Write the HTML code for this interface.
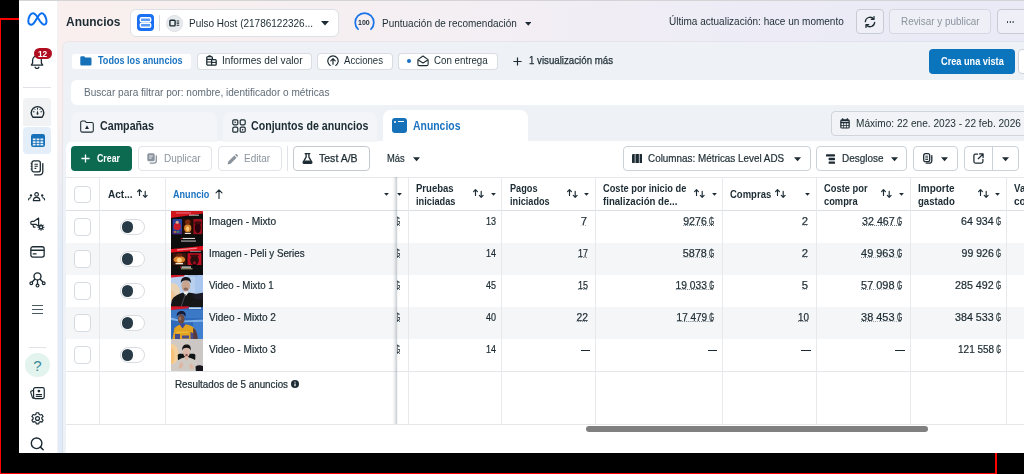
<!DOCTYPE html>
<html lang="es"><head>
<meta charset="utf-8">
<title>Anuncios</title>
<style>
*{box-sizing:border-box;margin:0;padding:0}
html,body{width:1024px;height:474px;overflow:hidden;background:#000}
body{position:relative;font-family:"Liberation Sans",sans-serif;font-size:12px;color:#1c2b33}
.a{position:absolute}
.t{position:absolute;white-space:nowrap;line-height:1;transform-origin:0 50%}
.r{position:absolute;white-space:nowrap;line-height:1;transform-origin:100% 50%}
.b{font-weight:bold}
#app{position:absolute;left:0;top:0;width:1024px;height:453px;overflow:hidden;background:#fff}
#blk{position:absolute;left:0;top:0;width:19px;height:453px;background:#000}
#main{position:absolute;left:58px;top:0;width:966px;height:453px;
 background:linear-gradient(180deg,rgba(225,235,247,0) 0%,rgba(225,235,247,0) 25%,#e1ebf7 55%,#e1ebf7 100%),linear-gradient(90deg,#f9efee 0%,#f4eff3 40%,#ecebf6 75%,#e9eaf6 100%)}
#sideb{position:absolute;left:57px;top:0;width:1px;height:453px;background:rgba(40,20,40,0.050)}
#topline{position:absolute;left:19px;top:0;width:1005px;height:1px;background:#d4d4d6}
#panel{position:absolute;left:62.500px;top:42.300px;width:970px;height:420px;border-radius:5.500px 0 0 0;background:#eef2f6;box-shadow:0 0 0 0.800px rgba(60,60,80,0.070)}
#card{position:absolute;left:66px;top:141px;width:970px;height:320px;border-radius:7px 0 0 0;background:#fff}
.chip{position:absolute;top:54px;height:15px;background:#fff;border-radius:3px}
.chip.o{box-shadow:0 0 0 1px #d9dde2}
.hb{position:absolute;top:9px;height:25px;background:#efeff7;border:1px solid #c6cbd4;border-radius:4px}
.tab{position:absolute;top:112px;height:30px;border-radius:8px 8px 0 0;background:#f3f5f8}
.tb{position:absolute;top:146px;height:25px;background:#fff;border:1px solid #cbd2d9;border-radius:4px}
.tb.d{border-color:#e1e4e8}
.red{background:#ff0000;position:absolute}
.vl{position:absolute;width:1px;background:#e7e9ec;top:177px;height:247px}
.hl{position:absolute;height:1px;background:#e4e6e9;left:66px;width:958px}
.cb{position:absolute;left:74px;width:16.800px;height:17.300px;border:1px solid #d6dbe1;border-radius:4px;background:#fff}
.tg{position:absolute;left:120.200px;width:24.800px;height:15.400px;border:1px solid #d8dce1;border-radius:8px;background:#fff}
.tg i{position:absolute;left:0.700px;top:1px;width:11.400px;height:11.400px;border-radius:50%;background:#283a45}
.row{position:absolute;left:66px;width:958px;height:32px}
.row.g{background:#f5f6f7}
.u{background:linear-gradient(90deg,#6d7880 50%,rgba(0,0,0,0) 50%) 0 9.900px/2px 1px repeat-x}
.gs{display:inline-block;width:5.100px;margin-left:2.300px;font-style:normal;transform:scaleX(.62);transform-origin:0 50%}
.ht{font-weight:bold;font-size:11px;color:#1c2b33}
.num{font-size:10.7px;color:#1c2b33;-webkit-text-stroke:0.220px #1c2b33}
</style>
</head>
<body>
<div id="app">
 <div id="main"></div>
 <div id="sideb"></div>
 <div id="panel"></div>
 <div id="card"></div>
 <!-- ===== header ===== -->
 <div class="t b" style="left: 66px; font-size: 13.5px; top: 15px; transform: scaleX(0.8853);">Anuncios</div>
 <div class="a" style="left:130px;top:9px;width:209px;height:28px;background:#fff;border:1px solid #dde1e6;border-radius:6px"></div>
 <div class="a" style="left:137px;top:14px;width:17px;height:17px;border-radius:4px;background:#1b6ff2"></div>
 <svg class="a" style="left:137px;top:14px" width="17" height="17" viewBox="0 0 17 17"><rect x="3.3" y="3.7" width="10.4" height="4" rx="1.2" fill="#5b9bf8" stroke="#fff" stroke-width="1.4"></rect><rect x="3.3" y="9.3" width="10.4" height="4" rx="1.2" fill="#5b9bf8" stroke="#fff" stroke-width="1.4"></rect></svg>
 <div class="a" style="left:159px;top:15px;width:1px;height:16px;background:#d8dce1"></div>
 <div class="a" style="left:166px;top:15px;width:17px;height:17px;border-radius:50%;background:#e9ecef;border:1px solid #dcdfe4"></div>
 <svg class="a" style="left:169px;top:19px" width="11" height="9" viewBox="0 0 11 9"><rect x="0.9" y="1.3" width="5.2" height="5.6" rx="0.8" fill="none" stroke="#1c2b33" stroke-width="1.4"></rect><path d="M7.6 2h2.6M7.6 4.1h2.6M7.6 6.2h2.6" stroke="#1c2b33" stroke-width="1.1"></path></svg>
 <div class="t" style="left: 189px; font-size: 10.8px; top: 18px; transform: scaleX(0.9264);">Pulso Host (21786122326...</div>
 <svg class="a" style="left:321px;top:21px" width="8" height="5" viewBox="0 0 8 5"><path d="M0 0h8L4 4.6z" fill="#1c2b33"></path></svg>
 <svg class="a" style="left:352.600px;top:11.300px" width="23" height="23" viewBox="0 0 23 23"><path d="M5.040 18.200A9.300 9.300 0 1 1 17.960 18.200" fill="none" stroke="#1a73e8" stroke-width="1.700" stroke-linecap="round"></path></svg>
 <div class="t b" style="left: 358.1px; font-size: 7.9px; top: 19px; transform: scaleX(0.8855);">100</div>
 <div class="t" style="left: 381.6px; font-size: 10.8px; top: 18px; transform: scaleX(0.9242);">Puntuación de recomendación</div>
 <svg class="a" style="left:524.500px;top:21.500px" width="6.500" height="4" viewBox="0 0 8 5"><path d="M0 0h8L4 4.6z" fill="#1c2b33"></path></svg>
 <div class="t" style="left: 669.2px; font-size: 10.8px; top: 16px; transform: scaleX(0.9276);">Última actualización: hace un momento</div>
 <div class="hb" style="left:856px;width:28px"></div>
 <svg class="a" style="left:863.500px;top:15.800px" width="12" height="12" viewBox="0 0 12 12"><path d="M1.300 5.600A4.700 4.700 0 0 1 9.600 3M10.700 6.400A4.700 4.700 0 0 1 2.400 9" fill="none" stroke="#1c2b33" stroke-width="1.250" stroke-linecap="round"></path><path d="M10 0.600v2.700H7.300M2 11.400V8.700h2.700" fill="none" stroke="#1c2b33" stroke-width="1.250" stroke-linecap="round" stroke-linejoin="round"></path></svg>
 <div class="hb" style="left:889px;width:102px;border-color:#d4d8e0"></div>
 <div class="t" style="left: 900.5px; font-size: 10.8px; color: rgb(138, 148, 158); top: 16px; transform: scaleX(0.9164);">Revisar y publicar</div>
 <div class="hb" style="left:997px;width:40px"></div>
 <div class="a" style="left:1006.700px;top:21px;width:1.800px;height:1.800px;background:#1c2b33;border-radius:1px;box-shadow:2.800px 0 0 #1c2b33,5.600px 0 0 #1c2b33"></div>

 <!-- ===== chips row ===== -->
 <div class="chip" style="left:72px;width:119px"></div>
 <svg class="a" style="left:80px;top:56px" width="12" height="10" viewBox="0 0 12 10"><path d="M0.3 1.5a1.2 1.2 0 0 1 1.2-1.2h2.6l1.3 1.3h4.9a1.2 1.2 0 0 1 1.2 1.2v5.4a1.2 1.2 0 0 1-1.2 1.2H1.5a1.2 1.2 0 0 1-1.2-1.2z" fill="#1771b8"></path></svg>
 <div class="t b" style="left: 98px; font-size: 10.9px; color: rgb(26, 115, 192); top: 55px; transform: scaleX(0.8334);">Todos los anuncios</div>
 <div class="chip o" style="left:198px;width:113px"></div>
 <svg class="a" style="left:206px;top:55px" width="11" height="11" viewBox="0 0 11 11"><rect x="0.8" y="1.6" width="5.6" height="8.6" rx="1.2" fill="none" stroke="#1c2b33" stroke-width="1.3"></rect><path d="M2.5 0.8h2.2M1 4.4h5M1 7h5" stroke="#1c2b33" stroke-width="1.2"></path><rect x="5.6" y="4.6" width="4.6" height="5.6" rx="1" fill="#fff" stroke="#1c2b33" stroke-width="1.3"></rect><path d="M5.8 7.4h4.2" stroke="#1c2b33" stroke-width="1.1"></path></svg>
 <div class="t" style="left: 222.07px; font-size: 10.9px; top: 55px; transform: scaleX(0.931);">Informes del valor</div>
 <div class="chip o" style="left:318px;width:74px"></div>
 <svg class="a" style="left:326.5px;top:54.5px" width="12" height="12" viewBox="0 0 12 12"><path d="M3.2 10.4A5.2 5.2 0 1 1 8.8 10.4" fill="none" stroke="#1c2b33" stroke-width="1.2" stroke-linecap="round"></path><path d="M6 9.2V4M3.8 5.9L6 3.7l2.2 2.2" fill="none" stroke="#1c2b33" stroke-width="1.2" stroke-linecap="round" stroke-linejoin="round"></path></svg>
 <div class="t" style="left: 343.7px; font-size: 10.9px; top: 55px; transform: scaleX(0.8828);">Acciones</div>
 <div class="chip o" style="left:399px;width:98px"></div>
 <div class="a" style="left:407px;top:59px;width:4px;height:4px;border-radius:50%;background:#1771c6"></div>
 <svg class="a" style="left:416.5px;top:54.5px" width="12" height="12" viewBox="0 0 12 12"><path d="M0.9 4.6L6 1l5.1 3.6v4.6a1.4 1.4 0 0 1-1.4 1.4H2.3A1.4 1.4 0 0 1 .9 9.200z" fill="none" stroke="#1c2b33" stroke-width="1.100" stroke-linejoin="round"></path><path d="M1.2 5l4.8 3 4.8-3" fill="none" stroke="#1c2b33" stroke-width="1.100" stroke-linejoin="round"></path></svg>
 <div class="t" style="left: 433.8px; font-size: 10.9px; top: 55px; transform: scaleX(0.8951);">Con entrega</div>
 <svg class="a" style="left:513px;top:57px" width="9" height="9" viewBox="0 0 9 9"><path d="M4.5 0.4v8.2M0.4 4.5h8.2" stroke="#1c2b33" stroke-width="1.2"></path></svg>
 <div class="t" style="left: 528.6px; font-size: 10.9px; -webkit-text-stroke: 0.25px rgb(28, 43, 51); top: 55px; transform: scaleX(0.8897);">1 visualización más</div>
 <div class="a" style="left:929px;top:49px;width:86px;height:25px;border-radius:4px;background:#0a75bd"></div>
 <div class="t b" style="left: 941px; font-size: 11px; color: rgb(255, 255, 255); top: 56px; transform: scaleX(0.8346);">Crea una vista</div>
 <div class="a" style="left:1018px;top:49px;width:30px;height:25px;border-radius:4px;background:#fff;border:1px solid #cfd4da"></div>

 <!-- ===== search ===== -->
 <div class="a" style="left:71px;top:80px;width:960px;height:25px;border-radius:6px;background:#fff"></div>
 <div class="t" style="left: 83.8px; font-size: 10.8px; color: rgb(95, 107, 118); top: 87px; transform: scaleX(0.9317);">Buscar para filtrar por: nombre, identificador o métricas</div>

 <!-- ===== tabs ===== -->
 <div class="tab" style="left:71px;width:146px"></div>
 <svg class="a" style="left:80px;top:119.5px" width="14" height="13" viewBox="0 0 14 13"><path d="M0.7 2.4A1.5 1.5 0 0 1 2.200.9h2.700l1.400 1.500h5.500a1.500 1.500 0 0 1 1.500 1.500v6.700a1.500 1.500 0 0 1-1.500 1.500H2.200a1.500 1.500 0 0 1-1.500-1.500z" fill="none" stroke="#1c2b33" stroke-width="1.050"></path><path d="M7 5.200L9 9H5z" fill="#1c2b33"></path></svg>
 <div class="t b" style="left: 99.6px; font-size: 12.5px; top: 120px; transform: scaleX(0.8535);">Campañas</div>
 <div class="tab" style="left:223px;width:154px"></div>
 <svg class="a" style="left:232px;top:119px" width="14" height="14" viewBox="0 0 14 14"><g fill="none" stroke="#1c2b33" stroke-width="1.2"><rect x="0.8" y="0.8" width="5" height="5" rx="1.2"></rect><rect x="8.2" y="0.8" width="5" height="5" rx="1.2"></rect><rect x="0.8" y="8.200" width="5" height="5" rx="1.2"></rect><rect x="8.2" y="8.200" width="5" height="5" rx="1.2"></rect></g><path d="M2.600 2.300l1.800 1-1.800 1zM10 9.700l1.800 1-1.800 1z" fill="#1c2b33"></path></svg>
 <div class="t b" style="left: 250.7px; font-size: 12.5px; top: 120px; transform: scaleX(0.8499);">Conjuntos de anuncios</div>
 <div class="a" style="left:383px;top:110px;width:145px;height:32px;border-radius:8px 8px 0 0;background:#fff"></div>
 <div class="a" style="left:391.5px;top:117.5px;width:15px;height:15px;border-radius:3px;background:#1771b8"></div>
 <div class="a" style="left:394px;top:120.500px;width:2px;height:2px;border-radius:50%;background:#fff"></div>
 <div class="a" style="left:397.5px;top:121px;width:6px;height:1px;background:#fff"></div>
 <div class="t b" style="left: 413.4px; font-size: 12.5px; color: rgb(26, 115, 192); top: 120px; transform: scaleX(0.8334);">Anuncios</div>
 <div class="a" style="left:831px;top:111px;width:210px;height:25px;border-radius:4px;background:#f1f3f6;border:1px solid #cfd4da"></div>
 <svg class="a" style="left:840px;top:117.500px" width="10" height="11" viewBox="0 0 10 11"><rect x="1.900" y="0.200" width="1.500" height="2.400" rx="0.600" fill="#1c2b33"></rect><rect x="6.600" y="0.200" width="1.500" height="2.400" rx="0.600" fill="#1c2b33"></rect><rect x="0.200" y="1.300" width="9.600" height="9.300" rx="1.700" fill="#1c2b33"></rect><path d="M1.500 3.200h7v0.800h-7zM1.500 5.200h1.800v1.700H1.500zM4.100 5.200h1.800v1.700H4.100zM6.700 5.200h1.800v1.700H6.700zM1.500 7.800h1.800v1.600H1.500zM4.100 7.800h1.800v1.600H4.100zM6.700 7.800h1.800v1.600H6.700z" fill="#f1f3f6"></path></svg>
 <div class="t" style="left: 856px; font-size: 10.7px; top: 118px; transform: scaleX(0.9443);">Máximo: 22 ene. 2023 - 22 feb. 2026</div>
 <!-- ===== toolbar ===== -->
 <div class="a" style="left:71px;top:146px;width:61px;height:25px;border-radius:4px;background:#0b6a50"></div>
 <svg class="a" style="left:81px;top:154px" width="9" height="9" viewBox="0 0 9 9"><path d="M4.500 0.400v8.200M0.400 4.500h8.200" stroke="#fff" stroke-width="1.300"></path></svg>
 <div class="t b" style="left: 97px; font-size: 10.8px; color: rgb(255, 255, 255); top: 153px; transform: scaleX(0.817);">Crear</div>
 <div class="tb d" style="left:138px;width:74px"></div>
 <svg class="a" style="left:147px;top:153px" width="11" height="11" viewBox="0 0 11 11"><rect x="0.300" y="0.300" width="7.400" height="8" rx="1.600" fill="#8a949e"></rect><path d="M9.300 2.800v5a2.300 2.300 0 0 1-2.300 2.300H3.200" fill="none" stroke="#8a949e" stroke-width="1.300" stroke-linecap="round"></path><path d="M2.200 3h3.600M2.200 5h2.400" stroke="#fff" stroke-width="0.900"></path></svg>
 <div class="t" style="left: 163.7px; font-size: 10.8px; color: rgb(138, 148, 158); top: 153px; transform: scaleX(0.9248);">Duplicar</div>
 <div class="tb d" style="left:218px;width:64px"></div>
 <svg class="a" style="left:226.500px;top:153.500px" width="11" height="11" viewBox="0 0 11 11"><path d="M0.600 10.400l0.700-3L7.300 1.400l2.300 2.300-6 6zM8 0.800l0.600-0.500a0.900 0.900 0 0 1 1.200 0l0.900 0.900a0.900 0.900 0 0 1 0 1.200l-0.500 0.600z" fill="#8a949e"></path></svg>
 <div class="t" style="left: 243.8px; font-size: 10.8px; color: rgb(138, 148, 158); top: 153px; transform: scaleX(0.9263);">Editar</div>
 <div class="a" style="left:287px;top:146px;width:1px;height:25px;background:#dfe2e6"></div>
 <div class="tb" style="left:293px;width:77px;border-color:#c4c9cf"></div>
 <svg class="a" style="left:302px;top:153px" width="11" height="11" viewBox="0 0 11 11"><path d="M3.200 0.700h4.600M4.100 0.700v3.400L1.200 9.100a0.800 0.800 0 0 0 0.700 1.200h7.200a0.800 0.800 0 0 0 0.700-1.200L6.900 4.100V0.700" fill="none" stroke="#1c2b33" stroke-width="1.300" stroke-linejoin="round" stroke-linecap="round"></path><path d="M2.600 7.400h5.800l1.300 2.600H1.300z" fill="#1c2b33"></path></svg>
 <div class="t" style="left: 319px; font-size: 10.8px; -webkit-text-stroke: 0.25px rgb(28, 43, 51); top: 153px; transform: scaleX(0.975);">Test A/B</div>
 <div class="t" style="left: 386.5px; font-size: 10.8px; -webkit-text-stroke: 0.2px rgb(28, 43, 51); top: 153px; transform: scaleX(0.8667);">Más</div>
 <svg class="a" style="left:413px;top:156.500px" width="7" height="5" viewBox="0 0 8 5"><path d="M0 0h8L4 4.600z" fill="#1c2b33"></path></svg>

 <div class="tb" style="left:623px;width:188px"></div>
 <svg class="a" style="left:631.500px;top:153.700px" width="10.500" height="9.200" viewBox="0 0 10.500 9.200"><rect x="0" y="0" width="10.500" height="9.200" rx="1.300" fill="#1c2b33"></rect><path d="M3.150 0v9.200M7.350 0v9.200" stroke="#fff" stroke-width="0.700"></path></svg>
 <div class="t" style="left: 648.2px; font-size: 10.8px; -webkit-text-stroke: 0.2px rgb(28, 43, 51); top: 153px; transform: scaleX(0.9148);">Columnas: Métricas Level ADS</div>
 <svg class="a" style="left:793.500px;top:156.500px" width="7" height="5" viewBox="0 0 8 5"><path d="M0 0h8L4 4.600z" fill="#1c2b33"></path></svg>
 <div class="tb" style="left:816px;width:91px"></div>
 <svg class="a" style="left:826px;top:153.500px" width="9" height="10" viewBox="0 0 9 10"><rect x="0" y="0.200" width="9" height="2.400" rx="0.600" fill="#1c2b33"></rect><rect x="2.600" y="3.800" width="6.400" height="2.400" rx="0.600" fill="#1c2b33"></rect><rect x="2.600" y="7.400" width="6.400" height="2.400" rx="0.600" fill="#1c2b33"></rect></svg>
 <div class="t" style="left: 841.7px; font-size: 10.8px; -webkit-text-stroke: 0.2px rgb(28, 43, 51); top: 153px; transform: scaleX(0.9221);">Desglose</div>
 <svg class="a" style="left:890.500px;top:156.500px" width="7" height="5" viewBox="0 0 8 5"><path d="M0 0h8L4 4.600z" fill="#1c2b33"></path></svg>
 <div class="tb" style="left:913px;width:45px"></div>
 <svg class="a" style="left:922.500px;top:153px" width="10" height="11" viewBox="0 0 10 11"><rect x="0.700" y="0.700" width="6" height="8" rx="1.600" fill="none" stroke="#1c2b33" stroke-width="1.300"></rect><path d="M8.800 2.600v5.200a2.400 2.400 0 0 1-2.400 2.400H3.200" fill="none" stroke="#1c2b33" stroke-width="1.300" stroke-linecap="round"></path><path d="M2.300 3.200h2.800M2.300 4.900h2.800M2.300 6.500h2.800" stroke="#1c2b33" stroke-width="0.900"></path></svg>
 <svg class="a" style="left:940.500px;top:156.500px" width="7" height="5" viewBox="0 0 8 5"><path d="M0 0h8L4 4.600z" fill="#1c2b33"></path></svg>
 <div class="tb" style="left:964px;width:55px"></div>
 <div class="a" style="left:991.500px;top:146px;width:1px;height:25px;background:#cbd2d9"></div>
 <svg class="a" style="left:972.500px;top:153px" width="11" height="11" viewBox="0 0 11 11"><path d="M4.600 1H2.400A1.500 1.500 0 0 0 0.900 2.500v6A1.500 1.500 0 0 0 2.400 10h6a1.500 1.500 0 0 0 1.500-1.500V6.300" fill="none" stroke="#1c2b33" stroke-width="1.250" stroke-linecap="round"></path><path d="M6.600 0.900h3.500v3.500M9.900 1.100L5.300 5.700" fill="none" stroke="#1c2b33" stroke-width="1.250" stroke-linecap="round" stroke-linejoin="round"></path></svg>
 <svg class="a" style="left:1001.500px;top:156.500px" width="7" height="5" viewBox="0 0 8 5"><path d="M0 0h8L4 4.600z" fill="#1c2b33"></path></svg>

 <!-- ===== table ===== -->
 <div class="row g" style="top:243px"></div>
 <div class="row g" style="top:307px"></div>
 <div class="hl" style="top:177px"></div>
 <div class="hl" style="top:210px;background:#dcdfe3"></div>
 <div class="hl" style="top:371px"></div>
 <div class="hl" style="top:424px"></div>
 <div class="vl" style="left:99px"></div>
 <div class="vl" style="left:165px"></div>
 <div class="vl" style="left:408px"></div>
 <div class="vl" style="left:501px"></div>
 <div class="vl" style="left:595px"></div>
 <div class="vl" style="left:722px"></div>
 <div class="vl" style="left:816px"></div>
 <div class="vl" style="left:910px"></div>
 <div class="vl" style="left:1006px"></div>
 <!-- sticky col shadow -->
 <div class="a" style="left:392px;top:177px;width:5px;height:247px;background:linear-gradient(90deg,rgba(120,130,140,0) 0%,rgba(120,130,140,0.08) 40%,rgba(120,130,140,0.30) 80%,rgba(120,130,140,0.38) 100%)"></div>
 <div class="a" style="left:397px;top:177px;width:1px;height:247px;background:rgba(120,130,140,0.08)"></div>

 <!-- header cells -->
 <div class="cb" style="top:186px"></div>
 <div class="t ht" style="left: 107.5px; top: 188.5px; transform: scaleX(0.9129);">Act...</div>
 <svg class="a" style="left:136.500px;top:189px" width="11" height="9" viewBox="0 0 11 9"><path d="M2.500 6.400V0.700M0.600 2.600L2.500 0.700 4.400 2.600M8.200 2.200V8.300M6.300 6.400l1.900 1.900 1.900-1.900" fill="none" stroke="#1c2b33" stroke-width="1.150" stroke-linecap="round" stroke-linejoin="round"></path></svg>
 <div class="t ht" style="font-size: 11px; left: 173.4px; color: rgb(26, 115, 192); top: 189px; transform: scaleX(0.8244);">Anuncio</div>
 <svg class="a" style="left:214.500px;top:189px" width="8" height="10" viewBox="0 0 8 10"><path d="M4 9.400V1M1 3.900L4 0.900l3 3" fill="none" stroke="#1c2b33" stroke-width="1.100" stroke-linecap="round" stroke-linejoin="round"></path></svg>
 <svg class="a" style="left:383.500px;top:193px" width="5" height="3" viewBox="0 0 8 5"><path d="M0 0h8L4 4.600z" fill="#1c2b33"></path></svg>
 <svg class="a" style="left:397px;top:193px" width="5" height="3" viewBox="0 0 8 5"><path d="M0 0h8L4 4.600z" fill="#1c2b33"></path></svg>
 <!-- metric header cells -->
 <div class="t ht" style="left: 415.6px; top: 183px; transform: scaleX(0.8662);">Pruebas</div>
 <div class="t ht" style="left: 415.6px; top: 196px; transform: scaleX(0.839);">iniciadas</div>
 <svg class="a" style="left:473px;top:189px" width="11" height="9" viewBox="0 0 11 9"><path d="M2.500 6.400V0.700M0.600 2.600L2.500 0.700 4.400 2.600M8.200 2.200V8.300M6.300 6.400l1.900 1.900 1.900-1.900" fill="none" stroke="#1c2b33" stroke-width="1.150" stroke-linecap="round" stroke-linejoin="round"></path></svg>
 <svg class="a" style="left:490.5px;top:193px" width="5" height="3" viewBox="0 0 8 5"><path d="M0 0h8L4 4.600z" fill="#1c2b33"></path></svg>
 <div class="t ht" style="left: 509.6px; top: 183px; transform: scaleX(0.833);">Pagos</div>
 <div class="t ht" style="left: 509.6px; top: 196px; transform: scaleX(0.8326);">iniciados</div>
 <svg class="a" style="left:566.5px;top:189px" width="11" height="9" viewBox="0 0 11 9"><path d="M2.500 6.400V0.700M0.600 2.600L2.500 0.700 4.400 2.600M8.200 2.200V8.300M6.300 6.400l1.900 1.900 1.900-1.900" fill="none" stroke="#1c2b33" stroke-width="1.150" stroke-linecap="round" stroke-linejoin="round"></path></svg>
 <svg class="a" style="left:584px;top:193px" width="5" height="3" viewBox="0 0 8 5"><path d="M0 0h8L4 4.600z" fill="#1c2b33"></path></svg>
 <div class="t ht" style="left: 602.9px; top: 183px; transform: scaleX(0.8413);">Coste por inicio de</div>
 <div class="t ht" style="left: 602.9px; top: 196px; transform: scaleX(0.8751);">finalización de...</div>
 <svg class="a" style="left:693.5px;top:189px" width="11" height="9" viewBox="0 0 11 9"><path d="M2.500 6.400V0.700M0.600 2.600L2.500 0.700 4.400 2.600M8.200 2.200V8.300M6.300 6.400l1.900 1.900 1.900-1.900" fill="none" stroke="#1c2b33" stroke-width="1.150" stroke-linecap="round" stroke-linejoin="round"></path></svg>
 <svg class="a" style="left:711.5px;top:193px" width="5" height="3" viewBox="0 0 8 5"><path d="M0 0h8L4 4.600z" fill="#1c2b33"></path></svg>
 <div class="t ht" style="left: 730.1px; top: 189px; transform: scaleX(0.8641);">Compras</div>
 <svg class="a" style="left:774.5px;top:189px" width="11" height="9" viewBox="0 0 11 9"><path d="M2.500 6.400V0.700M0.600 2.600L2.500 0.700 4.400 2.600M8.200 2.200V8.300M6.300 6.400l1.900 1.900 1.900-1.900" fill="none" stroke="#1c2b33" stroke-width="1.150" stroke-linecap="round" stroke-linejoin="round"></path></svg>
 <svg class="a" style="left:805px;top:193px" width="5" height="3" viewBox="0 0 8 5"><path d="M0 0h8L4 4.600z" fill="#1c2b33"></path></svg>
 <div class="t ht" style="left: 823.6px; top: 183px; transform: scaleX(0.8491);">Coste por</div>
 <div class="t ht" style="left: 823.6px; top: 196px; transform: scaleX(0.8469);">compra</div>
 <svg class="a" style="left:881px;top:189px" width="11" height="9" viewBox="0 0 11 9"><path d="M2.500 6.400V0.700M0.600 2.600L2.500 0.700 4.400 2.600M8.200 2.200V8.300M6.300 6.400l1.900 1.900 1.900-1.900" fill="none" stroke="#1c2b33" stroke-width="1.150" stroke-linecap="round" stroke-linejoin="round"></path></svg>
 <svg class="a" style="left:898.5px;top:193px" width="5" height="3" viewBox="0 0 8 5"><path d="M0 0h8L4 4.600z" fill="#1c2b33"></path></svg>
 <div class="t ht" style="left: 917.7px; top: 183px; transform: scaleX(0.9075);">Importe</div>
 <div class="t ht" style="left: 917.7px; top: 196px; transform: scaleX(0.8715);">gastado</div>
 <svg class="a" style="left:978px;top:189px" width="11" height="9" viewBox="0 0 11 9"><path d="M2.500 6.400V0.700M0.600 2.600L2.500 0.700 4.400 2.600M8.200 2.200V8.300M6.300 6.400l1.900 1.900 1.900-1.900" fill="none" stroke="#1c2b33" stroke-width="1.150" stroke-linecap="round" stroke-linejoin="round"></path></svg>
 <svg class="a" style="left:995px;top:193px" width="5" height="3" viewBox="0 0 8 5"><path d="M0 0h8L4 4.600z" fill="#1c2b33"></path></svg>
 <div class="t ht" style="left: 1014px; top: 183px; transform: scaleX(0.874);">Va</div>
 <div class="t ht" style="left: 1014px; top: 196px; transform: scaleX(0.9148);">co</div>
 <!-- rows -->
 <div class="cb" style="top:218.4px"></div>
 <div class="tg" style="top:219.2px"><i></i></div>
 <div class="a th1" style="left:171px;top:211px;width:32px;height:32px;overflow:hidden"><svg width="32" height="32" viewBox="0 0 32 32"><defs><filter id="bl1" x="-10%" y="-10%" width="120%" height="120%"><feGaussianBlur stdDeviation="0.7"></feGaussianBlur></filter></defs><g filter="url(#bl1)"><rect x="-2" y="-2" width="36" height="36" fill="#0b0708"></rect><path d="M-2 -2h36v4.200L-2 7.200z" fill="#d0121f"></path><rect x="5" y="1.200" width="15" height="1.400" fill="#f08a8f" opacity="0.600"></rect><rect x="18" y="3.600" width="10" height="1.200" fill="#e8e8e8" opacity="0.700"></rect><rect x="1.500" y="8" width="9.500" height="15.200" fill="#253f9a"></rect><ellipse cx="6.200" cy="15.500" rx="3.600" ry="3.800" fill="#c81c2b"></ellipse><circle cx="6.200" cy="11.300" r="1.600" fill="#d9a58c"></circle><rect x="1.500" y="19.800" width="9.500" height="3.400" fill="#4a2a7a"></rect><rect x="3" y="20.300" width="2.300" height="1.300" fill="#c8a030"></rect><rect x="6" y="20.300" width="2.300" height="1.300" fill="#30a070"></rect><rect x="11.800" y="8" width="9.800" height="15.200" fill="#2c0d06"></rect><ellipse cx="16.700" cy="17.200" rx="3.600" ry="4" fill="#d8842e"></ellipse><ellipse cx="16.700" cy="17.800" rx="1.600" ry="2.400" fill="#f6c878"></ellipse><ellipse cx="16.700" cy="11" rx="2.600" ry="2.600" fill="#7a2a10"></ellipse><rect x="13.800" y="21.800" width="6" height="1.200" fill="#e8e0d8"></rect><rect x="22.400" y="8" width="8.800" height="15.200" fill="#980e1e"></rect><ellipse cx="26.800" cy="16.500" rx="3" ry="5.500" fill="#2a060a"></ellipse><ellipse cx="26.800" cy="11.800" rx="3.600" ry="1.500" fill="#3a080c"></ellipse><circle cx="10.300" cy="27.400" r="0.700" fill="#e01020"></circle><rect x="11.500" y="26.900" width="12.500" height="1.100" fill="#dadada"></rect><rect x="10" y="29.500" width="15" height="1.100" fill="#bcbcbc"></rect></g></svg></div>
 <div class="t num" style="left: 209.4px; top: 216px; transform: scaleX(0.9486);">Imagen - Mixto</div>
 <div class="a" style="left:396.500px;top:215.0px;width:4px;height:13px;overflow:hidden"><div class="t num" style="left: -1.6px; top: 1px;"><i class="gs" style="margin-left:0">₲</i></div><div class="a u" style="left:0;top:0;width:4px;height:13px;background-position:0 10px"></div></div>
 <div class="r num" style="right: 527.7px; top: 216px; transform: scaleX(0.841);">13</div>
 <div class="r num" style="right: 436.6px; top: 216px; transform: scaleX(1.0583);"><span class="u">7</span></div>
 <div class="r num" style="right: 309.6px; top: 216px; transform: scaleX(0.9945);"><span class="u">9276<i class="gs">₲</i></span></div>
 <div class="r num" style="right: 215.6px; top: 216px; transform: scaleX(1.0583);"><span class="u">2</span></div>
 <div class="r num" style="right: 121.8px; top: 216px; transform: scaleX(0.9977);"><span class="u">32 467<i class="gs">₲</i></span></div>
 <div class="r num" style="right: 23px; top: 216px; transform: scaleX(0.9977);">64 934<i class="gs">₲</i></div>
 <div class="cb" style="top:250.4px"></div>
 <div class="tg" style="top:251.2px"><i></i></div>
 <div class="a th2" style="left:171px;top:243px;width:32px;height:32px;overflow:hidden"><svg width="32" height="32" viewBox="0 0 32 32"><defs><filter id="bl2" x="-10%" y="-10%" width="120%" height="120%"><feGaussianBlur stdDeviation="0.7"></feGaussianBlur></filter></defs><g filter="url(#bl2)"><rect x="-2" y="-2" width="36" height="36" fill="#0a0707"></rect><path d="M-2 6.200L34 2.700V7.300L-2 9.800z" fill="#e0101f"></path><path d="M6 6.300L26 4.400V5.800L6 7.800z" fill="#f59aa0" opacity="0.850"></path><rect x="19" y="7.800" width="11" height="1" fill="#d8d8d8" opacity="0.700"></rect><rect x="1.500" y="10.200" width="13.700" height="11.800" fill="#3a1308"></rect><ellipse cx="8.300" cy="16.500" rx="5.800" ry="3.600" fill="#d8842e"></ellipse><ellipse cx="8.300" cy="17" rx="2.600" ry="2.200" fill="#ffd080"></ellipse><ellipse cx="8.300" cy="12" rx="3" ry="1.800" fill="#6a2410"></ellipse><rect x="4.500" y="20" width="7.500" height="1.300" fill="#efe6dc"></rect><rect x="16.500" y="10.200" width="13.900" height="11.800" fill="#c01024"></rect><ellipse cx="23.500" cy="17.500" rx="4.300" ry="4.800" fill="#2c070b"></ellipse><ellipse cx="23.500" cy="12.800" rx="4.600" ry="1.400" fill="#3a090d"></ellipse><circle cx="23.500" cy="19.800" r="1.500" fill="#a01020"></circle><circle cx="9.600" cy="24.200" r="0.600" fill="#e01020"></circle><rect x="10.500" y="23.500" width="9.500" height="1.200" fill="#ededed"></rect><rect x="10" y="25.300" width="11.500" height="1" fill="#bdb98a"></rect></g></svg></div>
 <div class="t num" style="left: 209.4px; top: 248px; transform: scaleX(0.9146);">Imagen - Peli y Series</div>
 <div class="a" style="left:396.500px;top:247.0px;width:4px;height:13px;overflow:hidden"><div class="t num" style="left: -1.6px; top: 1px;"><i class="gs" style="margin-left:0">₲</i></div><div class="a u" style="left:0;top:0;width:4px;height:13px;background-position:0 10px"></div></div>
 <div class="r num" style="right: 527.7px; top: 248px; transform: scaleX(0.841);">14</div>
 <div class="r num" style="right: 436.6px; top: 248px; transform: scaleX(0.841);"><span class="u">17</span></div>
 <div class="r num" style="right: 309.6px; top: 248px; transform: scaleX(1.0105);"><span class="u">5878<i class="gs">₲</i></span></div>
 <div class="r num" style="right: 215.6px; top: 248px; transform: scaleX(1.0583);"><span class="u">2</span></div>
 <div class="r num" style="right: 121.8px; top: 248px; transform: scaleX(1.0226);"><span class="u">49 963<i class="gs">₲</i></span></div>
 <div class="r num" style="right: 23px; top: 248px; transform: scaleX(0.9852);">99 926<i class="gs">₲</i></div>
 <div class="cb" style="top:282.4px"></div>
 <div class="tg" style="top:283.2px"><i></i></div>
 <div class="a th3" style="left:171px;top:275px;width:32px;height:32px;overflow:hidden"><svg width="32" height="32" viewBox="0 0 32 32"><defs><filter id="bl3" x="-10%" y="-10%" width="120%" height="120%"><feGaussianBlur stdDeviation="0.7"></feGaussianBlur></filter></defs><g filter="url(#bl3)"><rect x="-2" y="-2" width="36" height="36" fill="#b9d0ef"></rect><ellipse cx="2" cy="17" rx="7" ry="9" fill="#ead2b4"></ellipse><ellipse cx="0.500" cy="21" rx="3.500" ry="5.500" fill="#f0c494"></ellipse><rect x="24" y="-2" width="10" height="20" fill="#a9c6ef"></rect><path d="M-1 34L1 25C3 21 8 18.800 11.500 17.800L19 17.800C23 18.500 28 19.500 32 21.500L34 34z" fill="#121318"></path><path d="M21 19.500L33 17.500V25L24 24z" fill="#1b1d26"></path><ellipse cx="14.800" cy="10.800" rx="4.300" ry="5.900" fill="#c9a48e"></ellipse><ellipse cx="14.800" cy="14" rx="2.300" ry="1.600" fill="#8a6a5c"></ellipse><path d="M9.900 8.300C9.500 3.500 12.300 2 15 2 18.200 2 20.300 4 19.700 8.300 18.800 5.900 17.200 5.300 14.800 5.300 12.400 5.300 10.700 6.100 9.900 8.300z" fill="#14141a"></path><path d="M12.300 17.500L14.800 21 17.500 17.500 16 16.500H13.500z" fill="#f1efec"></path><path d="M14.500 19L10 32" stroke="#5a5a66" stroke-width="0.800"></path><path d="M-2 -2H15L13 1.200-2 2.800z" fill="#d41826"></path><rect x="17" y="0.300" width="10" height="1" fill="#8a9cc0" opacity="0.600"></rect><rect x="-2" y="31.300" width="20" height="3" fill="#c01424"></rect></g></svg></div>
 <div class="t num" style="left: 209.4px; top: 280px; transform: scaleX(0.9094);">Video - Mixto 1</div>
 <div class="a" style="left:396.500px;top:279.0px;width:4px;height:13px;overflow:hidden"><div class="t num" style="left: -1.6px; top: 1px;"><i class="gs" style="margin-left:0">₲</i></div><div class="a u" style="left:0;top:0;width:4px;height:13px;background-position:0 10px"></div></div>
 <div class="r num" style="right: 527.7px; top: 280px; transform: scaleX(0.841);">45</div>
 <div class="r num" style="right: 436.6px; top: 280px; transform: scaleX(0.841);"><span class="u">15</span></div>
 <div class="r num" style="right: 309.6px; top: 280px; transform: scaleX(0.9602);"><span class="u">19 033<i class="gs">₲</i></span></div>
 <div class="r num" style="right: 215.6px; top: 280px; transform: scaleX(1.0583);"><span class="u">5</span></div>
 <div class="r num" style="right: 121.8px; top: 280px; transform: scaleX(1.0226);"><span class="u">57 098<i class="gs">₲</i></span></div>
 <div class="r num" style="right: 23px; top: 280px; transform: scaleX(0.9993);">285 492<i class="gs">₲</i></div>
 <div class="cb" style="top:314.4px"></div>
 <div class="tg" style="top:315.2px"><i></i></div>
 <div class="a th4" style="left:171px;top:307px;width:32px;height:32px;overflow:hidden"><svg width="32" height="32" viewBox="0 0 32 32"><defs><filter id="bl4" x="-10%" y="-10%" width="120%" height="120%"><feGaussianBlur stdDeviation="0.7"></feGaussianBlur></filter></defs><g filter="url(#bl4)"><rect x="-2" y="-2" width="36" height="36" fill="#2f6ab9"></rect><rect x="-2" y="3" width="36" height="8" fill="#3a78c6"></rect><path d="M-2 10L12 13.500 34 12.500V14.800L12 15.300-2 12.500z" fill="#7fb0e8"></path><rect x="22" y="15" width="12" height="19" fill="#3f7fd0"></rect><path d="M1 34L3.500 21C6 18.500 9 17.500 11 17L15 17.500C19 18 22.500 19.500 24 22.500L27 34z" fill="#e2a320"></path><path d="M8.500 17.200L11.500 21.500 14.500 17.600 13 16.500H9.500z" fill="#3a4a9a"></path><path d="M4 27h5v5H4zM11 28.500h7v3h-7zM19.500 25l3.500 1.500V34h-3.500z" fill="#2a3fa0" opacity="0.850"></path><path d="M5.500 24.500h12v1.600h-12z" fill="#f0c040" opacity="0.700"></path><path d="M22 21C25 22 26.500 26 27 34H22.500z" fill="#5a3a3a"></path><ellipse cx="10.200" cy="12" rx="3.300" ry="4.800" fill="#6e4c42"></ellipse><ellipse cx="9" cy="11.500" rx="1.400" ry="2" fill="#9a7060"></ellipse><path d="M5.800 9.500C5.300 5.300 8 4 10.500 4 13.500 4 15.300 6 14.500 9.800 13.500 7.500 12 7 10.300 7 8.300 7 6.800 7.800 5.800 9.500z" fill="#151a38"></path><path d="M-2 -2H19L17 1.200-2 3.300z" fill="#d41826"></path><rect x="18" y="0.400" width="12" height="1.600" fill="#e6ecf6" opacity="0.850"></rect></g></svg></div>
 <div class="t num" style="left: 209.4px; top: 312px; transform: scaleX(0.9418);">Video - Mixto 2</div>
 <div class="a" style="left:396.500px;top:311.0px;width:4px;height:13px;overflow:hidden"><div class="t num" style="left: -1.6px; top: 1px;"><i class="gs" style="margin-left:0">₲</i></div><div class="a u" style="left:0;top:0;width:4px;height:13px;background-position:0 10px"></div></div>
 <div class="r num" style="right: 527.7px; top: 312px; transform: scaleX(0.841);">40</div>
 <div class="r num" style="right: 436.6px; top: 312px; transform: scaleX(0.9671);"><span class="u">22</span></div>
 <div class="r num" style="right: 309.6px; top: 312px; transform: scaleX(0.9353);"><span class="u">17 479<i class="gs">₲</i></span></div>
 <div class="r num" style="right: 215.6px; top: 312px; transform: scaleX(0.9251);"><span class="u">10</span></div>
 <div class="r num" style="right: 121.8px; top: 312px; transform: scaleX(1.0226);"><span class="u">38 453<i class="gs">₲</i></span></div>
 <div class="r num" style="right: 23px; top: 312px; transform: scaleX(0.9993);">384 533<i class="gs">₲</i></div>
 <div class="cb" style="top:346.4px"></div>
 <div class="tg" style="top:347.2px"><i></i></div>
 <div class="a th5" style="left:171px;top:339px;width:32px;height:32px;overflow:hidden"><svg width="32" height="32" viewBox="0 0 32 32"><defs><filter id="bl5" x="-10%" y="-10%" width="120%" height="120%"><feGaussianBlur stdDeviation="0.7"></feGaussianBlur></filter></defs><g filter="url(#bl5)"><rect x="-2" y="-2" width="36" height="36" fill="#d2cbc4"></rect><rect x="18" y="-2" width="16" height="30" fill="#cbc7c4"></rect><ellipse cx="1.500" cy="15" rx="6" ry="10" fill="#f3cf9c"></ellipse><ellipse cx="0" cy="17" rx="3.500" ry="8" fill="#f7c27a"></ellipse><rect x="6.800" y="14.800" width="17.500" height="6.500" rx="1.500" fill="#111214"></rect><path d="M3 34L4.500 24C6.500 21 10 19.300 12.500 18.800L18.500 18.800C21.500 19.500 25 21 26.500 24L28 34z" fill="#cfcbc4"></path><path d="M12.800 18.600L15.500 22 18.200 18.600 17 17.800H14z" fill="#d9b8a6"></path><ellipse cx="15.500" cy="13.300" rx="3.400" ry="4.900" fill="#dbb9a8"></ellipse><ellipse cx="15.500" cy="16" rx="1.300" ry="0.900" fill="#8a4a48"></ellipse><path d="M11.300 11.500C10.800 7.300 13 5.600 15.700 5.600 18.500 5.600 20.300 7.500 19.700 11.500 19 9.300 17.500 8.700 15.500 8.700 13.500 8.700 12 9.400 11.300 11.500z" fill="#121214"></path><ellipse cx="10" cy="26.500" rx="2" ry="3.200" fill="#dcb8a4" transform="rotate(20 10 26.500)"></ellipse><ellipse cx="20.500" cy="27.500" rx="2" ry="3" fill="#dcb8a4" transform="rotate(-20 20.500 27.500)"></ellipse><path d="M24.500 27.500C27 25.500 30 26 34 28V34H25z" fill="#15161a"></path></g></svg></div>
 <div class="t num" style="left: 209.4px; top: 344px; transform: scaleX(0.9418);">Video - Mixto 3</div>
 <div class="a" style="left:396.500px;top:343.0px;width:4px;height:13px;overflow:hidden"><div class="t num" style="left: -1.6px; top: 1px;"><i class="gs" style="margin-left:0">₲</i></div><div class="a u" style="left:0;top:0;width:4px;height:13px;background-position:0 10px"></div></div>
 <div class="r num" style="right: 527.7px; top: 344px; transform: scaleX(0.841);">14</div>
 <div class="a" style="left:580.5px;top:350px;width:9.500px;height:1.200px;background:#1c2b33"></div>
 <div class="a" style="left:707.5px;top:350px;width:9.500px;height:1.200px;background:#1c2b33"></div>
 <div class="a" style="left:801.0px;top:350px;width:9.500px;height:1.200px;background:#1c2b33"></div>
 <div class="a" style="left:895.0px;top:350px;width:9.500px;height:1.200px;background:#1c2b33"></div>
 <div class="r num" style="right: 23px; top: 344px; transform: scaleX(0.9341);">121 558<i class="gs">₲</i></div>
 <!-- footer -->
 <div class="t num" style="left: 174.8px; top: 379px; transform: scaleX(0.9189);">Resultados de 5 anuncios</div>
 <svg class="a" style="left:291px;top:380px" width="8" height="8" viewBox="0 0 8 8"><circle cx="4" cy="4" r="4" fill="#1c2b33"></circle><path d="M4 3.500v2.800" stroke="#fff" stroke-width="1.200"></path><circle cx="4" cy="2.100" r="0.700" fill="#fff"></circle></svg>
 <!-- scrollbar -->
 <div class="a" style="left:586px;top:426px;width:342px;height:6px;border-radius:3px;background:#808080"></div>
 <!-- ===== sidebar ===== -->
 <div id="blk"></div>
 <svg class="a" style="left:27px;top:12px" width="21" height="14" viewBox="0 0 21 14"><path d="M1.300 9.600C1.300 5.200 3.400 1.300 6 1.300c1.800 0 3.100 1.700 4.600 4.200 1.600 2.700 3 4.700 4.700 6.300 1.500 1.400 3.200 0.900 3.800-0.500 0.900-2.100 0-6.200-1.700-8.300-1-1.300-2.300-1.900-3.500-1.500-1.300 0.400-2.300 1.900-3.600 4.200C8.700 8.400 7.400 10.800 6 12c-1.500 1.300-4.700 0.900-4.700-2.400z" fill="none" stroke="#0a6ff0" stroke-width="2" stroke-linejoin="round"></path></svg>
 <!-- bell -->
 <svg class="a" style="left:30px;top:54px" width="14" height="15" viewBox="0 0 14 15"><path d="M2.600 9.200V6.200a4.400 4.400 0 0 1 8.800 0v3l1.300 1.900H1.300z" fill="none" stroke="#1c2b33" stroke-width="1.300" stroke-linejoin="round"></path><path d="M5.200 13.200a1.900 1.900 0 0 0 3.600 0" fill="none" stroke="#1c2b33" stroke-width="1.300" stroke-linecap="round"></path></svg>
 <div class="a" style="left:33.500px;top:48px;width:18px;height:10.500px;border-radius:5.500px;background:#b00d20"></div>
 <div class="t b" style="left: 37.8px; top: 49.5px; font-size: 8.5px; color: rgb(255, 255, 255); transform: scaleX(0.9766);">12</div>
 <div class="a" style="left:23px;top:87px;width:28px;height:1px;background:#dfe3e8"></div>
 <!-- gauge -->
 <div class="a" style="left:23px;top:98px;width:28px;height:28px;border-radius:4px 4px 0 0;background:#f1f2f4"></div>
 <svg class="a" style="left:30px;top:105px" width="15" height="14" viewBox="0 0 15 14"><path d="M3 12.300A6.300 6.300 0 1 1 12 12.300z" fill="none" stroke="#1c2b33" stroke-width="1.400" stroke-linejoin="round"></path><path d="M7.500 3.200v1M3.300 6.800h0.800M10.900 6.800h0.800M4.500 4l0.500 0.500M10.500 4l-0.500 0.500" stroke="#1c2b33" stroke-width="1" stroke-linecap="round"></path><path d="M7.500 5.200l1 3.600a1 1 0 0 1-2 0z" fill="#1c2b33"></path></svg>
 <!-- grid selected -->
 <div class="a" style="left:23px;top:126.500px;width:28px;height:27.500px;border-radius:4px;background:#e3eef8"></div>
 <svg class="a" style="left:30.500px;top:134px" width="14" height="13" viewBox="0 0 14 13"><rect x="0" y="0" width="14" height="13" rx="2.200" fill="#1771b8"></rect><path d="M1.800 4.400h2.800v1.900H1.800zM5.600 4.400h2.800v1.900H5.600zM9.400 4.400h2.800v1.900H9.400zM1.800 7.300h2.800v1.900H1.800zM5.600 7.300h2.800v1.900H5.600zM9.400 7.300h2.800v1.900H9.400zM1.800 10.100h2.800v1.300H1.800zM5.600 10.100h2.800v1.300H5.600zM9.400 10.100h2.800v1.300H9.400z" fill="#e3eef8"></path></svg>
 <!-- docs -->
 <svg class="a" style="left:30px;top:160px" width="15" height="16" viewBox="0 0 15 16"><rect x="1.900" y="0.900" width="8.400" height="11" rx="2" fill="none" stroke="#1c2b33" stroke-width="1.300"></rect><path d="M12.800 3.600v8.200a3 3 0 0 1-3 3H4.600" fill="none" stroke="#1c2b33" stroke-width="1.300" stroke-linecap="round"></path><path d="M4.500 4.200h3.400M4.500 6.300h3.400M4.500 8.400h1.800M0.600 3.600h1.300M0.600 6.300h1.300M0.600 9h1.300" stroke="#1c2b33" stroke-width="1.100"></path></svg>
 <!-- people -->
 <svg class="a" style="left:28.400px;top:191.500px" width="17.200" height="10" viewBox="0 0 19 11"><circle cx="9.500" cy="2.600" r="2" fill="none" stroke="#1c2b33" stroke-width="1.300"></circle><path d="M5.900 9.600a3.600 3.600 0 0 1 7.200 0z" fill="none" stroke="#1c2b33" stroke-width="1.300" stroke-linejoin="round"></path><circle cx="3.300" cy="3.800" r="1.300" fill="#1c2b33"></circle><circle cx="15.700" cy="3.800" r="1.300" fill="#1c2b33"></circle><path d="M0.700 8.600c0-1.400 1-2.300 2.300-2.300M18.300 8.600c0-1.400-1-2.300-2.300-2.300" fill="none" stroke="#1c2b33" stroke-width="1.300" stroke-linecap="round"></path></svg>
 <!-- megaphone + gear -->
 <svg class="a" style="left:30.200px;top:217.300px" width="15" height="14" viewBox="0 0 16 15"><path d="M1.900 4.600h2.400L9.200 1.200v8.600L6.600 8H1.900a1 1 0 0 1-1-1V5.600a1 1 0 0 1 1-1z" fill="none" stroke="#1c2b33" stroke-width="1.300" stroke-linejoin="round"></path><path d="M3 8.200l0.800 2.600h1.600" fill="none" stroke="#1c2b33" stroke-width="1.300" stroke-linejoin="round" stroke-linecap="round"></path><circle cx="11.800" cy="11" r="1.700" fill="none" stroke="#1c2b33" stroke-width="1.300"></circle><path d="M11.800 7.800v1.200M11.800 13v1.200M8.600 11h1.200M13.800 11H15M9.500 8.700l0.900 0.900M13.200 12.400l0.900 0.900M14.100 8.700l-0.900 0.900M10.400 12.400l-0.900 0.900" stroke="#1c2b33" stroke-width="1.200" stroke-linecap="round"></path></svg>
 <!-- card -->
 <svg class="a" style="left:29.700px;top:246.400px" width="15" height="12" viewBox="0 0 16 13"><rect x="0.800" y="0.800" width="14.400" height="11.200" rx="2.200" fill="none" stroke="#1c2b33" stroke-width="1.400"></rect><path d="M0.800 4.600h14.400" stroke="#1c2b33" stroke-width="1.600"></path><path d="M3.400 8.600h3" stroke="#1c2b33" stroke-width="1.400" stroke-linecap="round"></path></svg>
 <!-- tree -->
 <svg class="a" style="left:29px;top:272px" width="17" height="16" viewBox="0 0 17 16"><circle cx="8.500" cy="4.400" r="3.500" fill="none" stroke="#1c2b33" stroke-width="1.400"></circle><path d="M8.500 7.900v4M6 7l-3 3.300M11 7l3 3.300" stroke="#1c2b33" stroke-width="1.300"></path><circle cx="2.300" cy="11.300" r="1.400" fill="#fff" stroke="#1c2b33" stroke-width="1.200"></circle><circle cx="8.500" cy="13.600" r="1.400" fill="#fff" stroke="#1c2b33" stroke-width="1.200"></circle><circle cx="14.700" cy="11.300" r="1.400" fill="#fff" stroke="#1c2b33" stroke-width="1.200"></circle></svg>
 <!-- hamburger -->
 <div class="a" style="left:32px;top:305px;width:11px;height:1.300px;background:#4b5963;box-shadow:0 4px 0 #4b5963,0 8px 0 #4b5963"></div>
 <div class="a" style="left:29px;top:347px;width:17px;height:1px;background:#dfe3e8"></div>
 <!-- help -->
 <div class="a" style="left:25px;top:352.500px;width:24.500px;height:24.500px;border-radius:50%;background:#e3f3ee"></div>
 <div class="t" style="left:33.300px;top:357.500px;font-size:15px;color:#3a8a96">?</div>
 <!-- news -->
 <svg class="a" style="left:30.200px;top:387.400px" width="15" height="12.200" viewBox="0 0 16 13"><rect x="3.800" y="0.700" width="11.400" height="11.600" rx="1.800" fill="none" stroke="#1c2b33" stroke-width="1.300"></rect><path d="M3.800 3.400L1.400 4.400a1 1 0 0 0-0.600 1.300l1.800 5.600a1.600 1.600 0 0 0 1.500 1" fill="none" stroke="#1c2b33" stroke-width="1.200"></path><circle cx="9.500" cy="4.300" r="1.500" fill="#1c2b33"></circle><path d="M6.200 7.900h6.600M6.200 10h6.600" stroke="#1c2b33" stroke-width="1.100"></path></svg>
 <!-- gear -->
 <svg class="a" style="left:31px;top:412px" width="13" height="13" viewBox="0 0 14 14"><path d="M5.700 0.800h2.600l0.400 1.700 1.300 0.700 1.700-0.500 1.300 2.200-1.300 1.200v1.400l1.300 1.200-1.300 2.200-1.700-0.500-1.300 0.700-0.400 1.700H5.700l-0.400-1.700-1.300-0.700-1.700 0.500L1 8.700l1.300-1.200V6.100L1 4.900l1.300-2.200 1.700 0.500 1.300-0.700z" fill="none" stroke="#1c2b33" stroke-width="1.300" stroke-linejoin="round"></path><circle cx="7" cy="7" r="2.100" fill="none" stroke="#1c2b33" stroke-width="1.300"></circle></svg>
 <!-- search -->
 <svg class="a" style="left:30px;top:437px" width="15" height="15" viewBox="0 0 15 15"><circle cx="6.600" cy="6.300" r="5.300" fill="none" stroke="#1c2b33" stroke-width="1.400"></circle><path d="M10.400 10.100l2.800 2.700" stroke="#1c2b33" stroke-width="1.500" stroke-linecap="round"></path></svg>
 <div id="topline"></div>
</div>
<!-- red frame lines -->
<div class="red" style="left:0;top:18px;width:19px;height:2px"></div>
<div class="red" style="left:0;top:18px;width:1px;height:456px"></div>
<div class="red" style="left:0;top:473px;width:997px;height:1px"></div>
<div class="red" style="left:995px;top:453px;width:2px;height:21px"></div>


</body></html>
